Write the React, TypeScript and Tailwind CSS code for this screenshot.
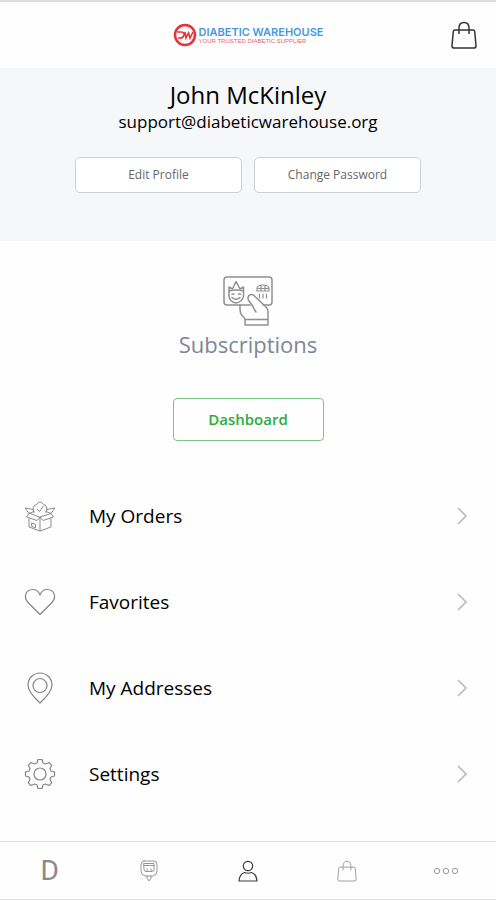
import type { ReactNode } from "react";

type IconProps = {
    className?: string;
};

type MenuRowProps = {
    label: string;
    icon: ReactNode;
};

function BagIcon({ className }: IconProps) {
    return (
        <svg viewBox="0 0 26 28" fill="none" stroke="currentColor" strokeLinejoin="round" className={className} aria-hidden="true">
            <path d="M4 9h18q1.500 0 1.700 1.500L25 24.500q.2 2.500-2.300 2.500H3.300Q.8 27 1 24.500l1.300-14Q2.500 9 4 9z" />
            <path d="M8 13V7q0-5.500 5-5.500T18 7v6" />
        </svg>
    );
}

function CardHandIcon() {
    return (
        <svg viewBox="0 0 50 50" fill="none" stroke="#909090" strokeWidth="1.500" strokeLinecap="round" strokeLinejoin="round" className="h-[50px] w-[50px]" aria-hidden="true">
            <path d="M27 29H4q-3 0-3-3V4q0-3 3-3h42q3 0 3 3v22q0 3-3 3h-6" />
            <path d="M17 29v4q0 5 3.500 8 1.500 1 1.500 3v5h23V36q0-3-2-5L31 19.500q-2.500-2-5 0-2 2.500 0 5.500l4 5.500q1 3 3 5.500M22 43.500h23" />
            <path d="M6 11l3.500 2L13 5.500l4 7.500 3.500-2v9q-1 6-7.500 7-6.500-1-7-7z" />
            <path d="M6 15q7-2 14.500 0M9 18h2M15.500 18h2M9 21.500q4.500 3.500 8 0" />
            <path d="M34 15v-2q0-4 6-4t6 4v2M38 9.500V15M42 9.500V15M34 12.500h12M34 15h12M36.500 18v4M40 18v4M43.500 18v4" strokeWidth="1.200" />
        </svg>
    );
}

function BoxIcon() {
    return (
        <svg viewBox="0 0 32 32" fill="none" stroke="#8b8b8b" strokeLinecap="round" strokeLinejoin="round" className="h-8 w-8" aria-hidden="true">
            <path d="M5 19v8l11 4 11-4v-8M16 17v14" />
            <path d="M5 13.500L2.500 17 13 20.500l3-3.500 3 3.500L29.500 17 27 13.500 16 17z" />
            <path d="M5 13.500L1 8l8.500 1.500M27 13.500L31 8l-8.500 1.500M5 13.500l5-2M27 13.500l-5-2" />
            <path d="M10 12.500Q7.500 9 10 6q1-1.500 2.500-1.500 3.500-5 7 0Q21 4.500 22 6q2.500 3 0 6.500" />
            <path d="M13 9l2.500 2.500 4-5.500" />
            <path d="M8 23l3.500 1.300v3.500L8 26.500z" />
        </svg>
    );
}

function HeartIcon() {
    return (
        <svg viewBox="0 0 32 32" fill="none" stroke="#858585" strokeWidth="1.200" strokeLinejoin="round" className="h-8 w-8" aria-hidden="true">
            <path d="M16 28.500L4.500 17Q1 13.500 1.500 9.500 2.500 3.500 9 3.500q5 0 7 5.500 2-5.500 7-5.500 6.500 0 7.500 6 .5 4-3 7.500z" />
        </svg>
    );
}

function PinIcon() {
    return (
        <svg viewBox="0 0 32 32" fill="none" stroke="#858585" strokeWidth="1.200" strokeLinejoin="round" className="h-8 w-8" aria-hidden="true">
            <path d="M16 31Q4 20 4 13a12 12 0 0 1 24 0q0 7-12 18z" />
            <circle cx="16" cy="13.500" r="7" />
        </svg>
    );
}

function GearIcon() {
    return (
        <svg viewBox="0 0 32 32" fill="none" stroke="#858585" strokeWidth="1.200" strokeLinejoin="round" className="h-8 w-8" aria-hidden="true">
            <path d="M14 1.500h4l1 3.500 2.500 1 3.500-1.500 2.800 2.800L26 10.500l1 2.500 3.500 1v4l-3.500 1-1 2.500 1.800 3.200-2.800 2.800-3.500-1.500-2.500 1-1 3.500h-4l-1-3.500-2.500-1L7 27.500l-2.800-2.800L6 21.500 5 19l-3.500-1v-4L5 13l1-2.500-1.800-3.200L7 4.500 10.500 6l2.500-1z" />
            <circle cx="16" cy="16" r="6" />
        </svg>
    );
}

function MeterIcon() {
    return (
        <svg viewBox="0 0 18 22" fill="none" stroke="#969696" strokeLinecap="round" strokeLinejoin="round" className="h-[22px] w-[18px]" aria-hidden="true">
            <path d="M4 1h10q3 0 3 4v6q0 4-4 5H5q-4-1-4-5V5q0-4 3-4z" />
            <path d="M4 3.500h10v6q0 2-2 2H6q-2 0-2-2zM4 5.500h10M7 11.500V9M11 11.500V9" />
            <path d="M7 16v2l2 3 2-3v-2" />
        </svg>
    );
}

function UserIcon() {
    return (
        <svg viewBox="0 0 20 22" fill="none" stroke="#3d3d3d" strokeWidth="1.200" strokeLinejoin="round" className="h-[22px] w-5" aria-hidden="true">
            <circle cx="10" cy="6" r="4.700" />
            <path d="M6.500 12.500Q1.500 14 1 21h18q-.5-7-5.500-8.500-3.500 1.500-7 0z" />
        </svg>
    );
}

function DotsIcon() {
    return (
        <svg viewBox="0 0 26 8" fill="none" stroke="#9b9b9b" className="h-2 w-[26px]" aria-hidden="true">
            <circle cx="4" cy="4" r="2.700" />
            <circle cx="13" cy="4" r="2.700" />
            <circle cx="22" cy="4" r="2.700" />
        </svg>
    );
}

function Logo() {
    return (
        <a href="#home" className="flex items-center gap-0.5">
            <svg viewBox="0 0 24 24" fill="none" className="h-6 w-6" aria-hidden="true">
                <circle cx="12" cy="12" r="10" stroke="#e8323a" strokeWidth="2.500" />
                <path d="M4 9h4q3.500 0 3 3t-4 3H5M12 9l1 6 2.500-5 1.500 5 3-6" stroke="#e8323a" strokeWidth="1.600" />
            </svg>
            <span className="flex flex-col">
                <span className="font-['Inter',sans-serif] text-[11px] leading-3 font-semibold text-[#4a98dc]">DIABETIC WAREHOUSE</span>
                <span className="font-['Liberation_Sans',sans-serif] text-[6px] leading-[7px] text-[#e0666c]">YOUR TRUSTED DIABETIC SUPPLIER</span>
            </span>
        </a>
    );
}

function MenuRow({ label, icon }: MenuRowProps) {
    return (
        <a href="#menu" className="flex h-[86px] items-center pr-7 pl-6">
            {icon}
            <span className="ml-[33px] flex-1 text-[19px] text-black">{label}</span>
            <svg viewBox="0 0 12 18" fill="none" stroke="#b8b8b8" strokeWidth="1.600" className="h-[18px] w-3" aria-hidden="true">
                <path d="M2 1l8 8-8 8" />
            </svg>
        </a>
    );
}

function App() {
    return (
        <div className="flex min-h-screen flex-col border-t-2 border-[#dedede] bg-[#fefefe] font-['Open_Sans','Noto_Sans',sans-serif]">
            <header className="grid h-[66px] grid-cols-[1fr_auto_1fr] items-center px-[19px]">
                <span />
                <Logo />
                <button type="button" aria-label="Shopping bag" className="justify-self-end text-[#333]">
                    <BagIcon className="h-7 w-[26px] stroke-[1.5]" />
                </button>
            </header>

            {/* Profile */}
            <section className="bg-[#f5f7f9] px-[75px] pt-3 pb-12 text-center text-black">
                <h1 className="text-2xl leading-[30px]">John McKinley</h1>
                <p className="text-[17px] leading-6">support@diabeticwarehouse.org</p>
                <div className="mt-[23px] flex gap-3">
                    <button type="button" className="h-9 flex-1 rounded-[5px] border border-[#cdd0d2] bg-white text-xs text-[#666]">
                        Edit Profile
                    </button>
                    <button type="button" className="h-9 flex-1 rounded-[5px] border border-[#cdd0d2] bg-white text-xs text-[#666]">
                        Change Password
                    </button>
                </div>
            </section>

            <main className="flex-1">
                <section className="flex flex-col items-center pt-[35px] pb-8">
                    <CardHandIcon />
                    <h2 className="mt-1 text-[22px] leading-7 text-[#7d8795]">Subscriptions</h2>
                    <button type="button" className="mt-10 h-[43px] w-[151px] rounded border border-[#7dc486] text-[15px] font-semibold text-[#2dac3b]">
                        Dashboard
                    </button>
                </section>

                <MenuRow label="My Orders" icon={<BoxIcon />} />
                <MenuRow label="Favorites" icon={<HeartIcon />} />
                <MenuRow label="My Addresses" icon={<PinIcon />} />
                <MenuRow label="Settings" icon={<GearIcon />} />
            </main>

            <nav className="grid h-[59px] grid-cols-5 items-center justify-items-center border-y border-[#dedede]">
                <a href="#discover" className="font-['Roboto',sans-serif] text-[28px] leading-8 text-[#8a8a8a]">D</a>
                <a href="#supplies" aria-label="Supplies"><MeterIcon /></a>
                <a href="#account" aria-label="Account"><UserIcon /></a>
                <a href="#cart" aria-label="Cart" className="text-[#a0a0a0]">
                    <BagIcon className="h-[22px] w-5 stroke-[1.3]" />
                </a>
                <a href="#more" aria-label="More"><DotsIcon /></a>
            </nav>
        </div>
    );
}

export default App;
